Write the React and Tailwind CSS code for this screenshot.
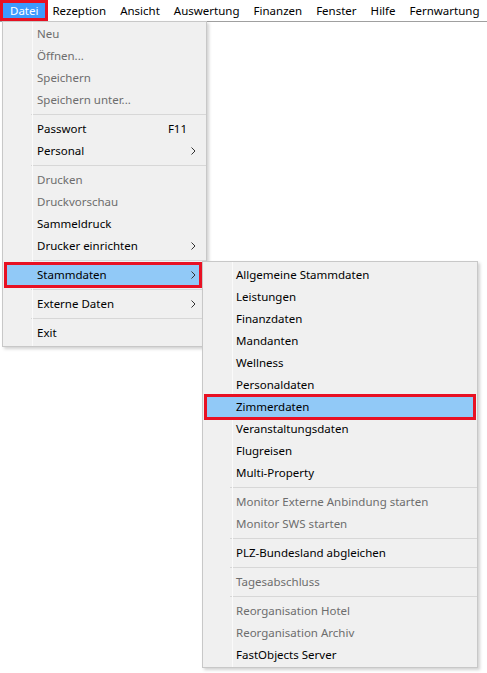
import React from 'react';

const font = { fontFamily: '"Noto Sans", "Open Sans", sans-serif' };

const topMenu = ['Datei', 'Rezeption', 'Ansicht', 'Auswertung', 'Finanzen', 'Fenster', 'Hilfe', 'Fernwartung'];

const dateiItems = [
  { label: 'Neu', disabled: true },
  { label: 'Öffnen...', disabled: true },
  { label: 'Speichern', disabled: true },
  { label: 'Speichern unter...', disabled: true },
  { sep: true },
  { label: 'Passwort', shortcut: 'F11' },
  { label: 'Personal', sub: true },
  { sep: true },
  { label: 'Drucken', disabled: true },
  { label: 'Druckvorschau', disabled: true },
  { label: 'Sammeldruck' },
  { label: 'Drucker einrichten', sub: true },
  { sep: true },
  { label: 'Stammdaten', sub: true, active: true },
  { sep: true },
  { label: 'Externe Daten', sub: true },
  { sep: true },
  { label: 'Exit' },
];

const stammItems = [
  { label: 'Allgemeine Stammdaten' },
  { label: 'Leistungen' },
  { label: 'Finanzdaten' },
  { label: 'Mandanten' },
  { label: 'Wellness' },
  { label: 'Personaldaten' },
  { label: 'Zimmerdaten', active: true },
  { label: 'Veranstaltungsdaten' },
  { label: 'Flugreisen' },
  { label: 'Multi-Property' },
  { sep: true },
  { label: 'Monitor Externe Anbindung starten', disabled: true },
  { label: 'Monitor SWS starten', disabled: true },
  { sep: true },
  { label: 'PLZ-Bundesland abgleichen' },
  { sep: true },
  { label: 'Tagesabschluss', disabled: true },
  { sep: true },
  { label: 'Reorganisation Hotel', disabled: true },
  { label: 'Reorganisation Archiv', disabled: true },
  { label: 'FastObjects Server' },
];

function Chevron() {
  return (
    <svg width="5" height="8" viewBox="0 0 5 8" className="shrink-0">
      <polyline points="0.5,0.5 4,4 0.5,7.5" fill="none" stroke="#333" strokeWidth="1" />
    </svg>
  );
}

function MenuList({ items, textLeft, marginRight }) {
  return (
    <div className="flex flex-col">
      {items.map((it, i) =>
        it.sep ? (
          <div key={i} className="h-[7px] flex items-center" style={{ paddingLeft: textLeft - 6 }}>
            <div className="h-px w-full bg-[#d7d7d7]" />
          </div>
        ) : (
          <div
            key={i}
            className={
              'h-[22px] flex items-center ml-[3px] ' +
              (it.active ? 'bg-[#91c9f7] outline-[3px] outline-solid outline-[#e81123] -outline-offset-1 relative z-10 ' : '') +
              (it.disabled ? 'text-[#6d6d6d]' : 'text-black')
            }
            style={{ marginRight }}
          >
            <span className="whitespace-nowrap" style={{ paddingLeft: textLeft - 3 }}>{it.label}</span>
            <span className="flex-1" />
            {it.shortcut && <span className="pr-[13px]">{it.shortcut}</span>}
            {it.sub && <span className="pr-[4px] flex items-center"><Chevron /></span>}
          </div>
        )
      )}
    </div>
  );
}

export default function App() {
  return (
    <div className="relative w-[487px] h-[673px] bg-white text-[11.5px] overflow-hidden" style={font}>
      <div className="h-[22px] flex items-center pl-[3px] border-b border-[#a0a0a0]">
        {topMenu.map((m, i) => (
          <div
            key={m}
            className={
              'h-[15px] flex items-center px-[7px] whitespace-nowrap ' +
              (i === 0 ? 'bg-[#3d9bff] text-white outline-[3px] outline-solid outline-[#e81123]' : 'text-black')
            }
          >
            {m}
          </div>
        ))}
      </div>

      <div className="absolute left-[2px] top-[21px] w-[205px] bg-[#f0f0f0] border border-[#c8c8c8] pt-[1px] pb-[2px] shadow-[2px_2px_3px_rgba(0,0,0,0.18)]">
        <div className="absolute left-[29px] top-0 bottom-0 w-px bg-[#fafafa]" />
        <MenuList items={dateiItems} textLeft={34} marginRight={6} />
      </div>

      <div className="absolute left-[202px] top-[261px] w-[276px] bg-[#f0f0f0] border border-[#c8c8c8] pt-[2px] pb-[1px] shadow-[2px_2px_3px_rgba(0,0,0,0.18)]">
        <div className="absolute left-[29px] top-0 bottom-0 w-px bg-[#fafafa]" />
        <MenuList items={stammItems} textLeft={33} marginRight={3} />
      </div>
    </div>
  );
}
